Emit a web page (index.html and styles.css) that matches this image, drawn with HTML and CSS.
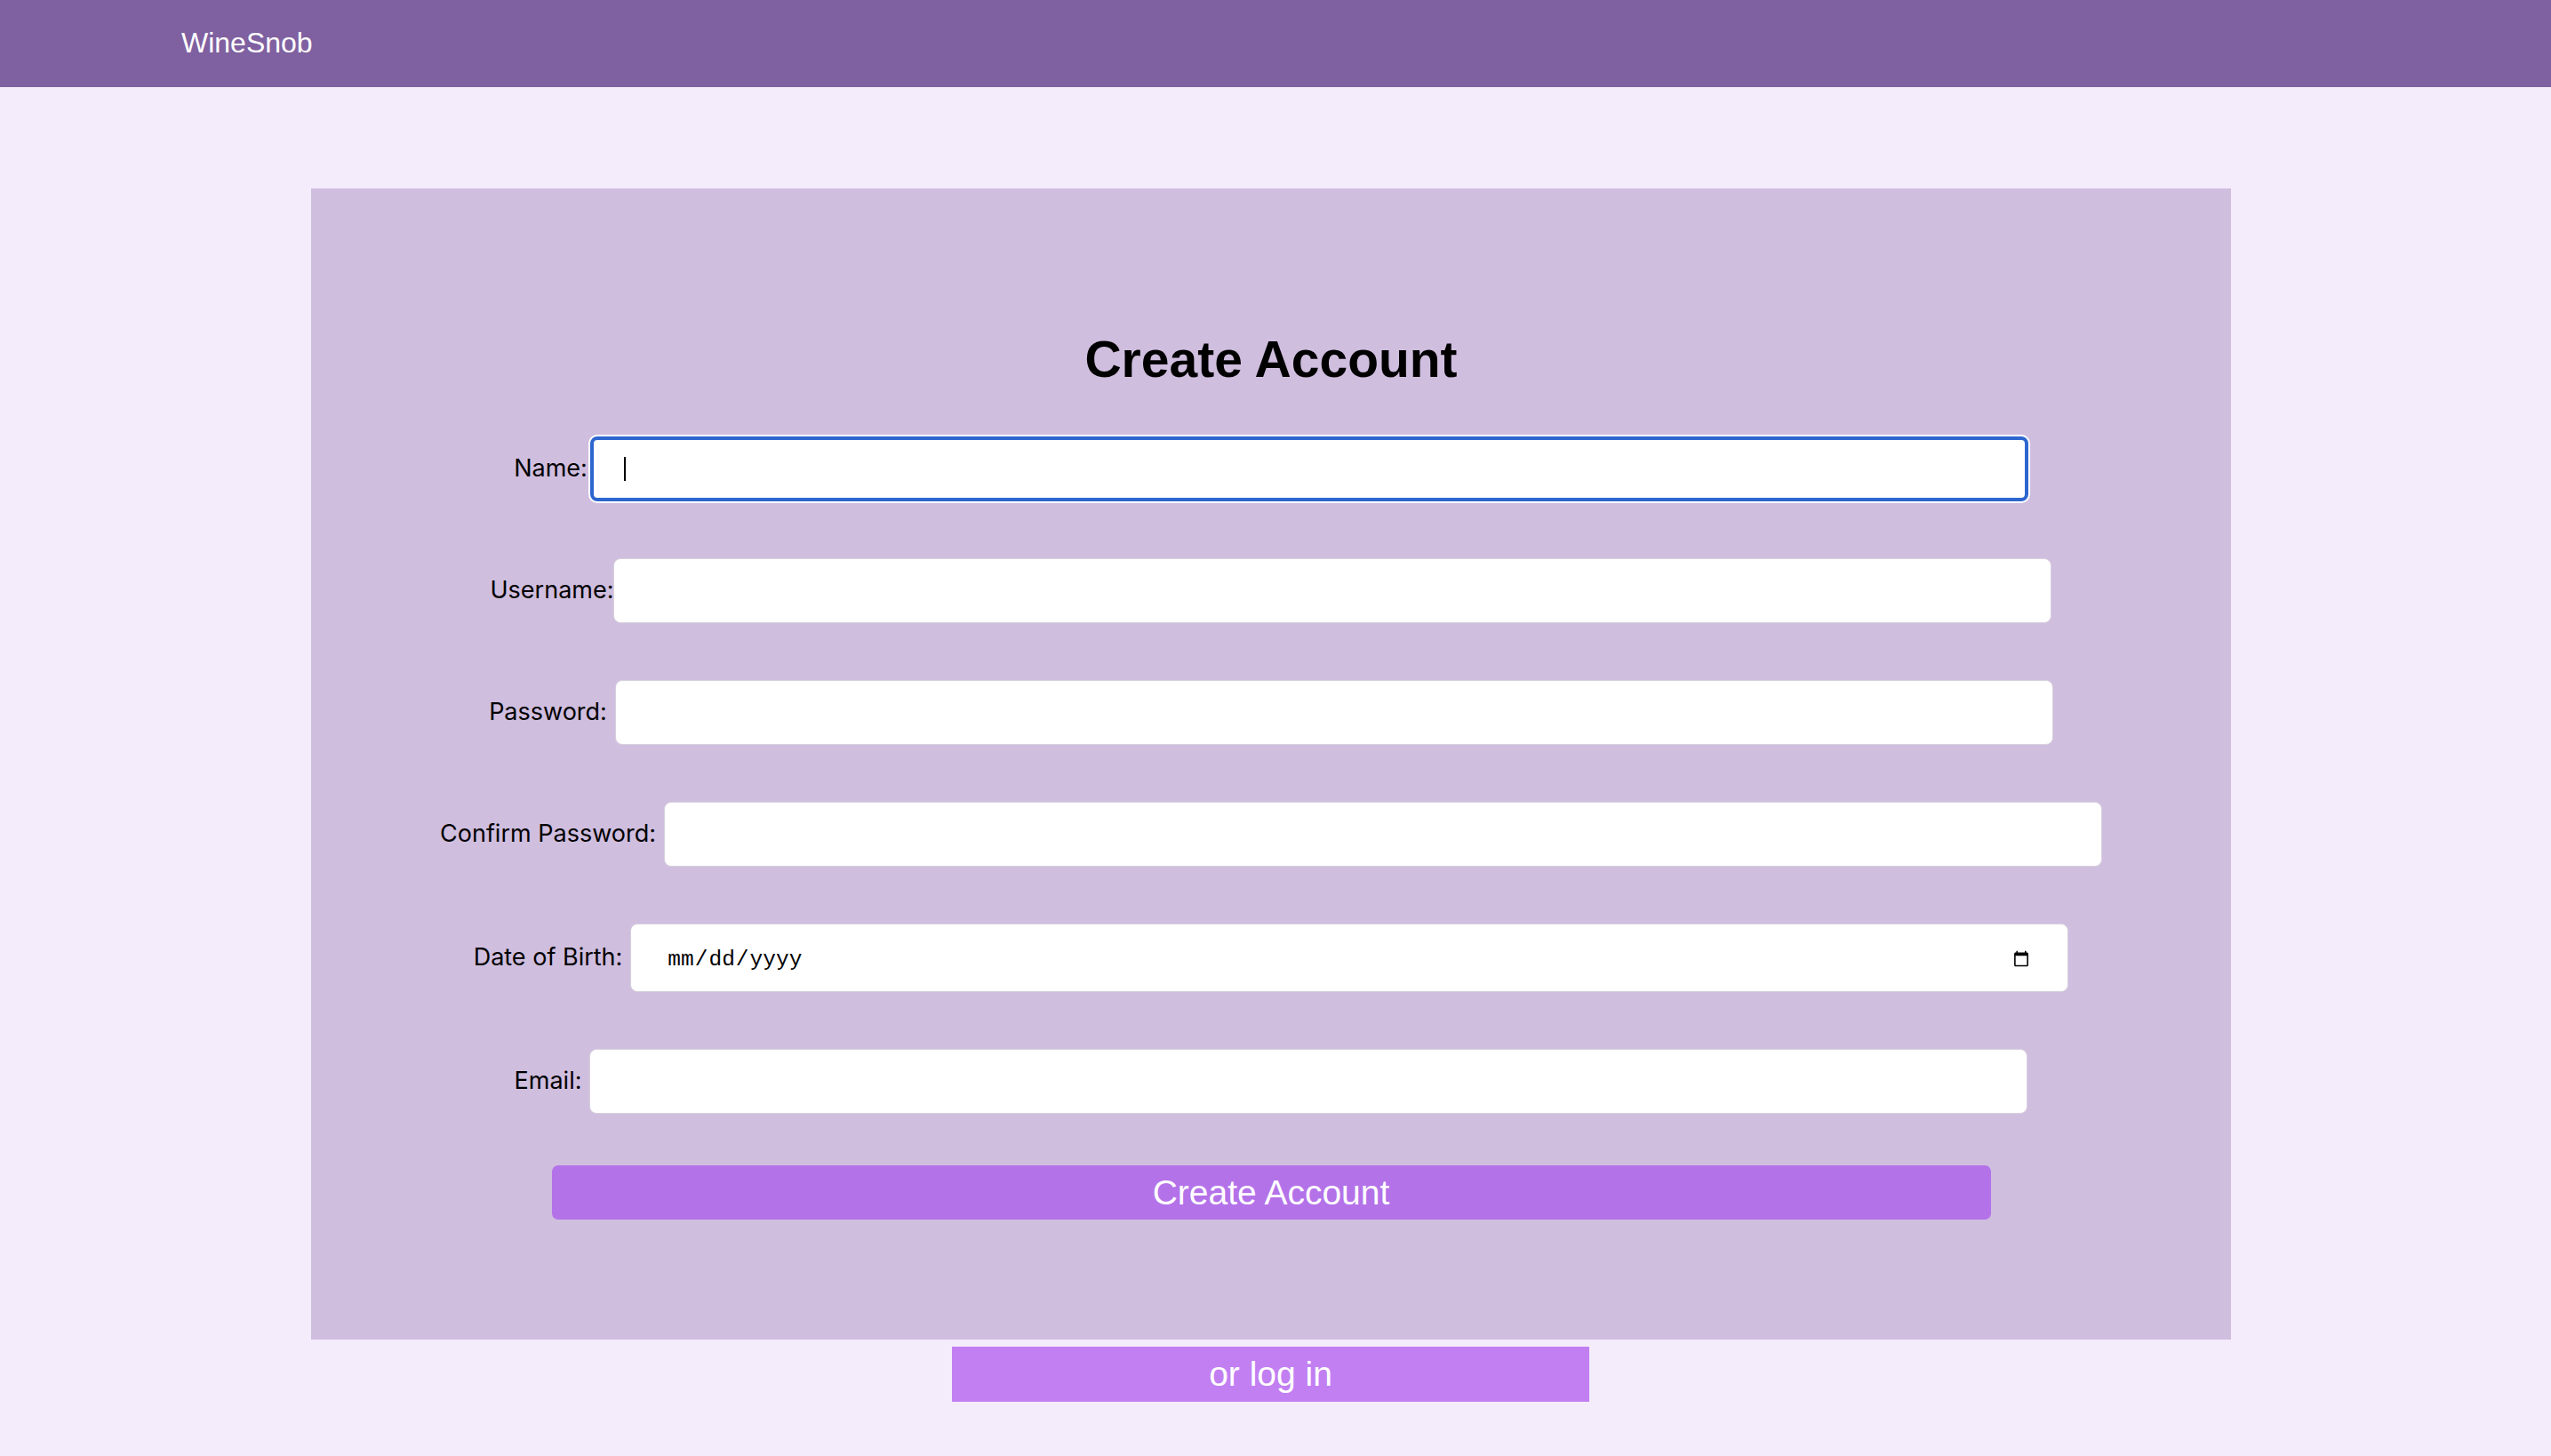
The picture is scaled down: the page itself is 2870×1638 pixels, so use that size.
FILE: index.html
```html
<!DOCTYPE html>
<html lang="en">
<head>
<meta charset="utf-8">
<title>WineSnob – Create Account</title>
<link rel="stylesheet" href="styles.css">
</head>
<body>
<header class="topbar">
  <span class="brand">WineSnob</span>
</header>
<main class="page">
  <section class="card">
    <h1 class="title">Create Account</h1>
    <form class="form">
      <div class="row">
        <label class="label" for="name">Name:</label>
        <span class="field-wrap">
          <input class="field field-focused" id="name" type="text">
          <span class="caret"></span>
        </span>
      </div>
      <div class="row">
        <label class="label" for="username">Username:</label>
        <input class="field" id="username" type="text">
      </div>
      <div class="row">
        <label class="label label-spaced" for="password">Password:</label>
        <input class="field" id="password" type="password">
      </div>
      <div class="row">
        <label class="label label-spaced" for="confirm">Confirm Password:</label>
        <input class="field" id="confirm" type="password">
      </div>
      <div class="row">
        <label class="label label-spaced" for="dob">Date of Birth:</label>
        <input class="field field-date" id="dob" type="date">
      </div>
      <div class="row">
        <label class="label label-spaced" for="email">Email:</label>
        <input class="field" id="email" type="email">
      </div>
      <button class="btn-primary" type="button">Create Account</button>
    </form>
  </section>
  <a class="btn-login" href="#">or log in</a>
</main>
</body>
</html>
```

FILE: styles.css
```css
html, body {
  margin: 0;
  padding: 0;
}

body {
  background: #f4ecfb;
  min-height: 1638px;
  font-family: Inter, "Liberation Sans", sans-serif;
  color: #000;
}

.topbar {
  height: 98px;
  background: #7f60a0;
  display: flex;
  align-items: center;
  padding-left: 204px;
  padding-bottom: 2px;
  box-sizing: border-box;
}

.brand {
  font-family: "Liberation Sans", Arial, sans-serif;
  font-size: 32px;
  color: #fff;
}

.page {
  display: flex;
  flex-direction: column;
  align-items: flex-start;
}

.card {
  width: 2160px;
  margin: 114px 0 0 350px;
  background: #d0bedf;
  padding: 159px 0 135px;
  box-sizing: border-box;
  display: flex;
  flex-direction: column;
  align-items: center;
}

.title {
  margin: 0;
  font-family: "Liberation Sans", Arial, sans-serif;
  font-weight: 700;
  font-size: 57px;
  line-height: 66px;
  text-align: center;
}

.form {
  margin-top: 54px;
  display: flex;
  flex-direction: column;
  align-items: center;
  gap: 64px;
}

.row {
  display: flex;
  align-items: center;
  justify-content: center;
}

.label {
  font-size: 27px;
  line-height: 1.2;
  white-space: nowrap;
}

.label-spaced {
  margin-right: 9px;
}

.field-wrap {
  position: relative;
  display: block;
  margin-left: 3px;
}

.field {
  display: block;
  width: 1618px;
  height: 73px;
  box-sizing: border-box;
  border: 1px solid #d6d0dc;
  border-radius: 8px;
  background: #fff;
  padding: 0 38px;
  font-size: 27px;
  outline: none;
}

.field-focused {
  border: 4px solid #2e66cf;
  box-shadow: 0 0 0 2px #fff;
  padding-left: 35px;
}

.caret {
  position: absolute;
  left: 38px;
  top: 23px;
  width: 2px;
  height: 27px;
  background: #000;
}

.field-date {
  height: 77px;
  font-family: "Liberation Mono", "Courier New", monospace;
  font-size: 24.5px;
  color: #000;
  padding: 3px 42px 0 40px;
}

.field-date::-webkit-calendar-picker-indicator {
  width: 20px;
  height: 21px;
  padding: 0;
  margin: 0;
}

.btn-primary {
  margin-top: -6px;
  width: 1619px;
  height: 61px;
  border: none;
  border-radius: 7px;
  background: #b472e9;
  color: #fff;
  font-family: "Liberation Sans", Arial, sans-serif;
  font-size: 39px;
  padding: 0;
  cursor: pointer;
}

.btn-login {
  margin: 8px 0 0 1071px;
  width: 717px;
  height: 62px;
  background: #c27ff2;
  color: #fff;
  font-family: "Liberation Sans", Arial, sans-serif;
  font-size: 39px;
  text-decoration: none;
  display: flex;
  align-items: center;
  justify-content: center;
}
```
